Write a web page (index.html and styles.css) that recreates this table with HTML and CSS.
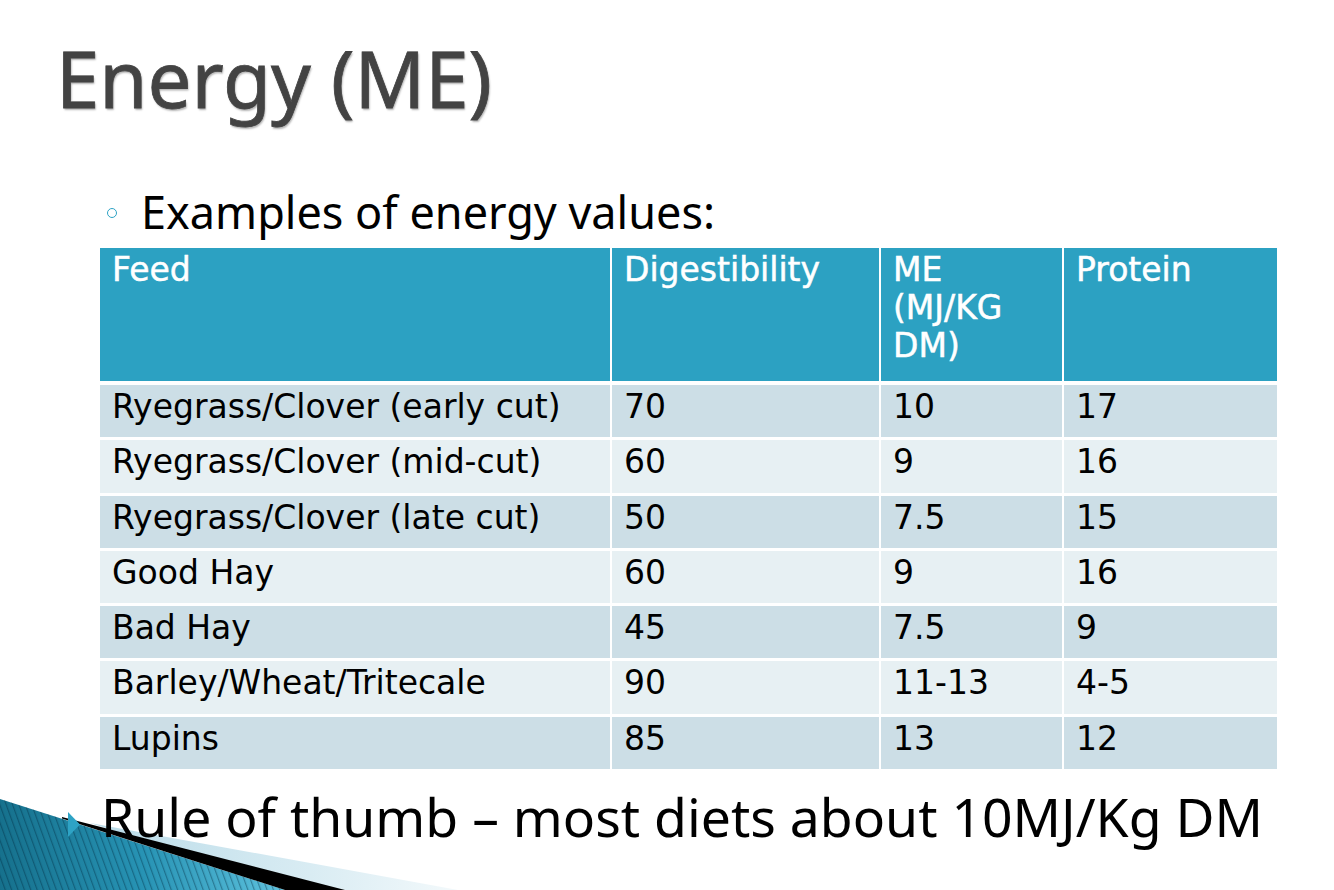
FILE: index.html
```html
<!DOCTYPE html>
<html lang="en">
<head>
<meta charset="utf-8">
<title>Energy (ME)</title>
<link rel="stylesheet" href="styles.css">
</head>
<body>
<div class="slide">
  <svg class="deco" width="470" height="100" viewBox="0 790 470 100" aria-hidden="true">
    <defs>
      <linearGradient id="tealGrad" x1="0" y1="0" x2="1" y2="0">
        <stop offset="0" stop-color="#16718d"/>
        <stop offset="0.5" stop-color="#2793b4"/>
        <stop offset="1" stop-color="#5ec2de"/>
      </linearGradient>
      <linearGradient id="lightGrad" x1="0" y1="0" x2="1" y2="0">
        <stop offset="0" stop-color="#b9dbe8"/>
        <stop offset="0.6" stop-color="#d9ecf3"/>
        <stop offset="1" stop-color="#f3f9fb"/>
      </linearGradient>
      <pattern id="stripes" width="6" height="8" patternUnits="userSpaceOnUse" patternTransform="rotate(-20)">
        <rect width="1.2" height="8" fill="rgba(0,40,60,0.38)"/>
      </pattern>
    </defs>
    <polygon points="90,823 458,890 300,890" fill="url(#lightGrad)"/>
    <polygon points="0,799 285,890 0,890" fill="url(#tealGrad)"/>
    <polygon points="0,799 285,890 0,890" fill="url(#stripes)"/>
    <polygon points="62,817 345,890 285,890 62,818.6" fill="#000"/>
    <polygon points="68,812 80,824.5 68,837" fill="#2ea3c5"/>
  </svg>

  <div class="content">
    <h1 class="title">Energy (ME)</h1>

    <div class="sub">
      <span class="ring"></span>
      <span>Examples of energy values:</span>
    </div>

    <div class="feed-table">
      <div class="cell head">Feed</div>
      <div class="cell head">Digestibility</div>
      <div class="cell head">ME<br>(MJ/KG<br>DM)</div>
      <div class="cell head">Protein</div>

      <div class="cell dark">Ryegrass/Clover (early cut)</div>
      <div class="cell dark">70</div>
      <div class="cell dark">10</div>
      <div class="cell dark">17</div>

      <div class="cell light">Ryegrass/Clover (mid-cut)</div>
      <div class="cell light">60</div>
      <div class="cell light">9</div>
      <div class="cell light">16</div>

      <div class="cell dark">Ryegrass/Clover (late cut)</div>
      <div class="cell dark">50</div>
      <div class="cell dark">7.5</div>
      <div class="cell dark">15</div>

      <div class="cell light">Good Hay</div>
      <div class="cell light">60</div>
      <div class="cell light">9</div>
      <div class="cell light">16</div>

      <div class="cell dark">Bad Hay</div>
      <div class="cell dark">45</div>
      <div class="cell dark">7.5</div>
      <div class="cell dark">9</div>

      <div class="cell light">Barley/Wheat/Tritecale</div>
      <div class="cell light">90</div>
      <div class="cell light">11-13</div>
      <div class="cell light">4-5</div>

      <div class="cell dark">Lupins</div>
      <div class="cell dark">85</div>
      <div class="cell dark">13</div>
      <div class="cell dark">12</div>
    </div>

    <div class="rule">Rule of thumb – most diets about 10MJ/Kg DM</div>
  </div>
</div>
</body>
</html>
```

FILE: styles.css
```css
html, body {
  margin: 0;
  padding: 0;
  background: #ffffff;
}

.slide {
  position: relative;
  width: 1334px;
  height: 890px;
  overflow: hidden;
  background: #ffffff;
}

.deco {
  position: absolute;
  left: 0;
  bottom: 0;
  z-index: 0;
  display: block;
}

.content {
  position: relative;
  z-index: 1;
  display: flex;
  flex-direction: column;
}

.title {
  margin: 0;
  padding: 24px 0 0 56px;
  font-family: "Noto Sans", "DejaVu Sans", sans-serif;
  font-weight: 400;
  font-size: 78px;
  line-height: 108px;
  color: #434343;
  -webkit-text-stroke: 0.8px #434343;
  text-shadow: 0 -1px 0 rgba(255,255,255,0.6), 1px 2px 2px rgba(0,0,0,0.3);
}

.sub {
  display: flex;
  align-items: center;
  margin-top: 49px;
  padding-left: 107px;
  font-family: "Noto Sans", "DejaVu Sans", sans-serif;
  font-size: 45px;
  line-height: 62px;
  color: #000000;
}

.ring {
  width: 8px;
  height: 8px;
  border: 1.6px solid #2ea3c5;
  border-radius: 50%;
  margin-right: 24px;
  margin-top: 2px;
}

.feed-table {
  display: grid;
  grid-template-columns: 510px 267px 181px 213px;
  grid-template-rows: 134px repeat(7, 52.3px);
  column-gap: 2px;
  row-gap: 3px;
  margin-top: 5px;
  margin-left: 100px;
  width: 1177px;
  font-family: "DejaVu Sans", "Liberation Sans", sans-serif;
  font-size: 33px;
  line-height: 38px;
}

.cell {
  padding: 3px 8px 0 12px;
  color: #000000;
  white-space: nowrap;
}

.head {
  background: #2ca1c2;
  color: #ffffff;
  margin-bottom: 1px;
  -webkit-text-stroke: 0.5px #ffffff;
}

.dark {
  background: #ccdee6;
}

.light {
  background: #e7f0f3;
}

.rule {
  margin-top: 11px;
  padding-left: 101px;
  font-family: "Noto Sans", "DejaVu Sans", sans-serif;
  font-size: 53.5px;
  line-height: 74px;
  color: #000000;
}
```
